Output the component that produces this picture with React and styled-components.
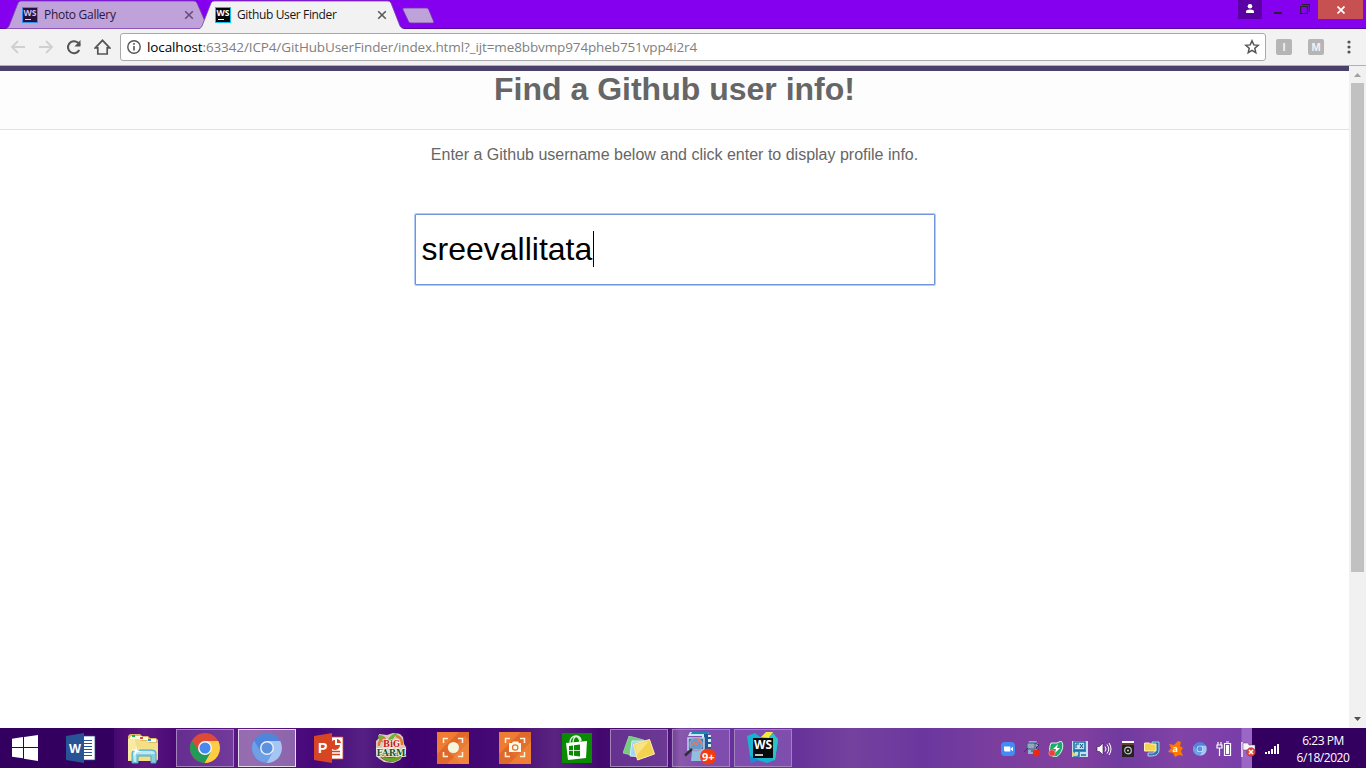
import React from "react";
import styled, { createGlobalStyle } from "styled-components";

const Global = createGlobalStyle`
  * { box-sizing: border-box; }
  body { margin: 0; background: #fff; overflow: hidden; }
  svg { display: block; flex: none; }
`;

const ui = `"Open Sans", "Noto Sans", sans-serif`;

const Screen = styled.div`
  width: 1366px;
  height: 768px;
  display: flex;
  flex-direction: column;
  overflow: hidden;
`;

/* ---------- browser window ---------- */
const TitleBar = styled.div`
  height: 29px;
  background: #8400ee;
  border-bottom: 1px solid #590a9c;
  display: flex;
  align-items: flex-start;
  justify-content: space-between;
  flex: none;
`;
const TabStrip = styled.div`
  display: flex;
  padding-left: 6px;
  height: 29px;
`;
const Tab = styled.div`
  position: relative;
  width: ${(p) => p.$width}px;
  margin-right: ${(p) => p.$overlap || 0}px;
  z-index: ${(p) => (p.$active ? 2 : 1)};
  height: 29px;
  display: flex;
  align-items: center;
  padding: 1px ${(p) => (p.$active ? 17 : 15)}px 0 16px;
`;
const TabShape = styled.svg`
  position: absolute;
  left: 0;
  top: 0;
`;
const TabTitle = styled.span`
  position: relative;
  flex: 1;
  margin-left: 6px;
  font: 12px/16px ${ui};
  letter-spacing: ${(p) => p.$spacing}px;
  color: ${(p) => (p.$active ? "#161616" : "#2c1742")};
  white-space: nowrap;
`;
const Above = styled.span`
  position: relative;
  display: block;
`;
const NewTab = styled.svg`
  margin: 7px 0 0 -2px;
`;
const WindowButtons = styled.div`
  display: flex;
  align-items: flex-start;
  margin-right: 3px;
`;
const WindowButton = styled.div`
  width: ${(p) => p.$width}px;
  height: 19px;
  background: ${(p) => p.$bg || "transparent"};
  display: flex;
  align-items: center;
  justify-content: center;
  padding-bottom: ${(p) => p.$lift || 0}px;
`;
const Toolbar = styled.div`
  height: 37px;
  background: #f2f2f2;
  border-bottom: 1px solid #b3afb8;
  display: flex;
  align-items: center;
  padding: 0 10px;
  flex: none;
`;
const NavButtons = styled.div`
  display: flex;
  gap: 12px;
  width: 110px;
`;
const AddressBar = styled.div`
  width: 1146px;
  height: 28px;
  border: 1px solid #a9a9a9;
  border-radius: 3px;
  background: #fff;
  display: flex;
  align-items: center;
  padding: 0 5px;
`;
const Url = styled.span`
  flex: 1;
  margin-left: 5px;
  font: 13.5px/20px ${ui};
  letter-spacing: -0.12px;
  color: #808080;
  white-space: nowrap;
`;
const Host = styled.span`
  color: #000;
`;
const Extension = styled.div`
  width: 16px;
  height: 16px;
  margin-left: ${(p) => p.$gap}px;
  border-radius: 2px;
  background: #b5b5b5;
  color: #f3f3f3;
  font: bold 11px/16px "Liberation Sans", sans-serif;
  text-align: center;
`;
const Dots = styled.svg`
  margin-left: 22.5px;
`;

/* ---------- page ---------- */
const Viewport = styled.div`
  height: 662px;
  display: flex;
  flex: none;
`;
const Page = styled.main`
  width: 1349px;
  background: #fff;
  display: flex;
  flex-direction: column;
  align-items: center;
  font-family: "Liberation Sans", Arial, sans-serif;
  color: #666;
`;
const PageHeader = styled.header`
  width: 100%;
  height: 64px;
  background: #fdfdfd;
  border-top: 5px solid #4b4068;
  border-bottom: 1px solid #e2e2e2;
  text-align: center;
`;
const Heading = styled.h1`
  margin: 0;
  font-size: 32px;
  line-height: 36px;
`;
const Hint = styled.p`
  margin: 15px 0 0;
  font-size: 16px;
  line-height: 20px;
`;
const UserField = styled.div`
  width: 522px;
  height: 73px;
  margin-top: 48px;
  margin-left: 1px;
  border: 1px solid #b1ccf7;
  border-radius: 2px;
  box-shadow: inset 0 0 0 1px #6f96d9;
  display: flex;
  align-items: center;
  padding: 0 0 1px 6.5px;
  color: #000;
  font-size: 32px;
  line-height: 36px;
`;
const Caret = styled.span`
  width: 1px;
  height: 36px;
  background: #000;
  margin-left: 1px;
`;
const ScrollTrack = styled.div`
  width: 17px;
  background: #f1f1f1;
  display: flex;
  flex-direction: column;
  align-items: center;
`;
const ScrollThumb = styled.div`
  width: 13px;
  height: 489px;
  background: #c1c1c1;
  margin-bottom: auto;
`;

/* ---------- taskbar ---------- */
const TaskBar = styled.footer`
  height: 40px;
  flex: none;
  display: flex;
  background: linear-gradient(
    90deg,
    #34005f 0, #34005f 114px, #46086f 114px, #5d1882 145px, #450672 180px,
    #5b1c84 250px, #46077a 315px, #562083 362px, #3e006f 410px, #450a75 500px,
    #5a237f 555px, #43086f 600px, #4d1578 670px, #744097 680px, #66309c 705px, #673399 800px,
    #75419e 850px, #6b379f 925px, #7b3e9e 1000px, #81409f 1080px,
    #713a9f 1120px, #8143a6 1180px, #7a3eaa 1241px, #9b66c5 1242px,
    #9b66c5 1252px, #34005f 1252px
  );
`;
const StartButton = styled.div`
  width: 52px;
  padding: 7px 0 0 12px;
`;
const Apps = styled.div`
  display: flex;
  gap: 4px;
`;
const TaskButton = styled.div`
  width: 58px;
  height: 38px;
  margin-top: 1px;
  border: 1px solid ${(p) => (p.$active ? "#e4d9ea" : p.$open ? "#a381ba" : "transparent")};
  background: ${(p) => (p.$active ? "rgba(255,255,255,.36)" : p.$open ? "rgba(194,157,226,.27)" : "none")};
  display: flex;
  align-items: center;
  justify-content: center;
`;
const Tray = styled.div`
  margin-left: 208px;
  display: flex;
  align-items: center;
  gap: 8px;
  height: 42px;
`;
const Clock = styled.div`
  width: 86px;
  text-align: center;
  color: #fff;
  font: 12px/17px ${ui};
  letter-spacing: -0.45px;
  padding-top: 4px;
`;

/* ---------- shared icons ---------- */
const TabFill = ({ d, fill, width }) => (
  <TabShape width={width} height="29">
    <path d={`${d}Z`} fill={fill} />
    <path d={d} fill="none" stroke="#75449e" strokeWidth=".8" />
  </TabShape>
);
const Favicon = ({ muted }) => (
  <Above>
    <svg width="16" height="16">
      <rect width="16" height="16" fill={muted ? "#2e91e8" : "#12bdf0"} />
      <rect x="1" y="1" width="14" height="14" fill={muted ? "#29113d" : "#05070a"} />
      <text x="1.5" y="8.5" fontSize="8" fontWeight="bold" fontFamily="Open Sans" fill={muted ? "#d5bfe8" : "#fff"} textLength="13" lengthAdjust="spacingAndGlyphs">WS</text>
      <path d="M3 12.5h6" stroke={muted ? "#e1cdef" : "#fff"} />
    </svg>
  </Above>
);
const CloseX = ({ color }) => (
  <Above>
    <svg width="10" height="10"><path d="M1.2 1.2l7.6 7.6M8.8 1.2l-7.6 7.6" stroke={color} strokeWidth="1.6" /></svg>
  </Above>
);
const Arrow = ({ flip }) => (
  <svg width="16" height="16" viewBox="0 0 16 16" transform={flip ? "scale(-1 1)" : undefined}>
    <path d="M15 8H2.5M8 2L2 8l6 6" fill="none" stroke="#d0d0d0" strokeWidth="1.8" />
  </svg>
);

const ChromeIcon = ({ blue, size = 30 }) => {
  const c = blue ? ["#4f86dc", "#6f9fe4", "#a6c5f3"] : ["#dc4a38", "#219b55", "#ffcd42"];
  return (
    <svg width={size} height={size} viewBox="0 0 30 30">
      <circle cx="15" cy="15" r="15" fill={c[0]} />
      <path d="M2 7.5A15 15 0 0 0 14.6 30L21.2 18.5 15 15 8.7 18.6Z" fill={c[1]} />
      <path d="M15 8.1h13.3A15 15 0 0 1 14.6 30L21.1 18.5Z" fill={c[2]} />
      <circle cx="15" cy="15" r="7" fill={blue ? "#e5effc" : "#f5f5f5"} />
      <circle cx="15" cy="15" r="5.5" fill={blue ? "#5e91dc" : "#4688ef"} />
    </svg>
  );
};
const WordIcon = () => (
  <svg width="30" height="30">
    <path d="M16 3h13v24H16Z" fill="#fff" stroke="#284f89" strokeWidth=".7" />
    <path d="M17 7.5h9M17 10.5h9M17 13.5h9M17 16.5h9M17 19.5h9M17 22.5h9" stroke="#285293" />
    <path d="M0 3L18 0v30L0 27Z" fill="#285394" />
    <text x="3" y="19.5" fontFamily="Liberation Sans" fontWeight="bold" fontSize="13" fill="#fff" textLength="12" lengthAdjust="spacingAndGlyphs">W</text>
  </svg>
);
const ExplorerIcon = () => (
  <svg width="32" height="31" viewBox="0 0 32 31">
    <path d="M1 5V3l2-2h10l2 2h6l2 2h6l2 2v20l-2 1H1Z" fill="#d9bb62" />
    <path d="M2 6h13V3H4ZM12 7h9V4h-8ZM20 9h9V6h-8Z" fill="#fffbe8" />
    <path d="M5 2h3v2H5Z" fill="#11bd32" /><path d="M13 4h3v2h-3Z" fill="#dd4a3a" /><path d="M21 6h3v2h-3Z" fill="#2994df" />
    <path d="M1 6h11l2 2h6l2 2h9v16l-4 2H1Z" fill="#f4df87" />
    <path d="M1 6h7l3 21H1Z" fill="#fff2b8" opacity=".6" />
    <path d="M5 30V20q0-3 4-3h16q4 0 4 3v10h-5v-7H11v7Z" fill="#86cde2" stroke="#50a9c4" />
    <path d="M6 21q0-3 4-3h14q4 0 4 3H9v8H7Z" fill="#bceaf2" />
    <path d="M9 12l1 5 3-2-2 3 4 1-5 0-3 4 1-5-4-1 5-1Z" fill="#fff" />
  </svg>
);
const PptIcon = () => (
  <svg width="30" height="30">
    <path d="M16 4h13v22H16Z" fill="#fff" stroke="#cf4a28" strokeWidth=".8" />
    <path d="M21 7v5h5a5 5 0 1 1-5-5ZM23 6a5 5 0 0 1 4 4h-4Z" fill="#d84523" />
    <path d="M18 18.5h8M18 21.5h8" stroke="#d84523" strokeWidth="1.3" />
    <path d="M0 3L18 0v30L0 27Z" fill="#d84523" />
    <text x="4" y="20" fontFamily="Liberation Sans" fontWeight="bold" fontSize="14" fill="#fff">P</text>
  </svg>
);
const FarmIcon = () => (
  <svg width="34" height="32" viewBox="-1 -1 34 32">
    <path d="M4 1l8 1 6-2 7 1 3 3 1 7 2 3v7l-3 2-3 4-7 3-9-1-6-4-2-4V8l3-3Z" fill="#eadfc5" opacity=".9" />
    <path d="M3 2q7-1 9 6Q17-1 24 0q-6 4-7 8-6 3-10 1-4-2-4-7Z" fill="#6bb334" />
    <path d="M4 13Q3 7 10 5M21 3q6 1 6 9" fill="none" stroke="#df7a31" strokeWidth="2.4" />
    <path d="M3 20h26q-3 8-13 9-10-1-13-9" fill="#6a3f1c" />
    <path d="M5 23q11 4 23-1-2 5-11 7-8-1-12-6Z" fill="#68a32b" />
    <text x="8" y="13.5" fontFamily="DejaVu Serif" fontWeight="bold" fontSize="9.5" stroke="#fff2d8" strokeWidth="1.6" paintOrder="stroke" fill="#c5162a" textLength="17" lengthAdjust="spacingAndGlyphs">BiG</text>
    <text x="1.5" y="22.5" fontFamily="DejaVu Serif" fontWeight="bold" fontSize="10" stroke="#fff8e3" strokeWidth="1.6" paintOrder="stroke" fill="#0b5933" textLength="29" lengthAdjust="spacingAndGlyphs">FARM</text>
  </svg>
);
const CaptureIcon = ({ camera }) => (
  <svg width="32" height="32">
    <rect width="32" height="32" fill="#ee7c32" />
    <path d="M0 22L22 0h10v10L10 32H0Z" fill="#df692a" />
    <path d="M12 20L28 4l4 4v24H24Z" fill="#f08a46" opacity={camera ? ".2" : ".55"} />
    <path d="M6.5 11V6.5H11M21 6.5h4.5V11M25.5 20v4.5H21M11 24.5H6.5V20" fill="none" stroke="#fff1db" strokeWidth="1.5" />
    {camera ? (
      <g><path d="M10 11h3l1-1.5h5l1 1.5h2v9H10Z" fill="#fffbe9" /><circle cx="16.2" cy="15.5" r="2.7" fill="#fffbe9" stroke="#e67530" strokeWidth="1.2" /></g>
    ) : <circle cx="16.4" cy="15.5" r="5.6" fill="#f4f7dd" />}
  </svg>
);
const StoreIcon = () => (
  <svg width="30" height="30">
    <rect width="30" height="30" fill="#088b00" />
    <path d="M8 10q0-6 5-7 5 1 5 7M11 10q0-6 4-7 4 1 4 5" fill="none" stroke="#d9f2d7" strokeWidth="1.3" />
    <path d="M4 10l21-2-1 17-18 2Z" fill="#fff" />
    <path d="M7 13l4-.5v4.7H7ZM12 12.3l6-.7v5.6h-6ZM7 18h4v4.7L7 22ZM12 18h6v5.6l-6-.8Z" fill="#088b00" />
  </svg>
);
const NotesIcon = () => (
  <svg width="33" height="25">
    <path d="M6 0l15 4-5 17L0 17Z" fill="#76cc81" stroke="#a2dfa2" strokeWidth=".7" />
    <path d="M9 5h14v16l-16-1Z" fill="#a5d4f7" stroke="#d9edf8" />
    <path d="M10.5 8.5l16-5 5 14.5-17 6Z" fill="#f3d251" stroke="#fff0a1" />
    <path d="M12 9l14-4-12 14Z" fill="#fff0a3" opacity=".6" />
  </svg>
);
const SearchAppIcon = () => (
  <svg width="34" height="34" viewBox="0 0 34 34">
    <path d="M6 1h19l-2 4H4Z" fill="#c7e9f5" /><path d="M8 1h17l-1 2H7Z" fill="#168bb3" />
    <path d="M18 4h9v24h-9Z" fill="#dceaf3" />
    <path d="M20 3h4v3h3v2h-3v3h3v2h-3v3h3v2h-3v10h-4Z" fill="#1e5997" />
    <path d="M4 7h16v12H4Z" fill="#3a78b9" stroke="#b9cfe8" strokeWidth="1.6" />
    <path d="M8 20h19v10H7Z" fill="#91bfdd" />
    <circle cx="12" cy="13.5" r="6.2" fill="#8db5df" fillOpacity=".55" stroke="#9a9bb8" strokeWidth="1.4" />
    <path d="M7 15l3-4 2 3 3-6 3 6" fill="none" stroke="#f17759" strokeWidth="1.2" />
    <path d="M8 18L1 24.5" stroke="#2e2e37" strokeWidth="2.4" />
    <circle cx="24" cy="25.5" r="8" fill="#f23b10" />
    <text x="18" y="29.5" fill="#fff" fontFamily="Open Sans" fontWeight="bold" fontSize="10.5" textLength="12.5" lengthAdjust="spacingAndGlyphs">9+</text>
  </svg>
);
const WebStormIcon = () => (
  <svg width="32" height="32">
    <path d="M0 4l8-3 5 4 12-3 6 7-3 19-8 3-10-3-6 3Z" fill="#18b3cf" />
    <path d="M14 5l5-5h7l-4 6Z" fill="#f4e843" /><path d="M22 5l4-4 5 6-3 21-3-1Z" fill="#27c4c7" /><path d="M3 24l9 4-8 3Z" fill="#168cdd" />
    <rect x="6" y="6" width="20" height="20" fill="#07090c" />
    <text x="7" y="16.5" fill="#fff" fontFamily="Open Sans" fontWeight="bold" fontSize="12" textLength="18" lengthAdjust="spacingAndGlyphs">WS</text>
    <path d="M8 23h8" stroke="#fff" strokeWidth="1.5" />
  </svg>
);

const trayIcons = [
  <g><rect x="1" y="1" width="14" height="14" rx="4" fill="#438cf5" /><path d="M4 5.5h6.3v5H5L4 9.5Zm6.8 2L13 5.7v4.6l-2.2-1.8Z" fill="#fff" /></g>,
  <g><path d="M5 0h8l-1 2h2v3h-2l2 3-1 5H4V3Z" fill="#93b0ca" /><path d="M3 2h8v6H3Z" fill="#95a5c2" stroke="#355a80" /><path d="M4 7L0 11M7 10h7M11 2l4 2-3 3 3 2" fill="none" stroke="#263f5b" /><circle cx="12.3" cy="12" r="3.4" fill="#ee2714" /></g>,
  <g><path d="M3 2q7 1 10-2 3 3 1 9-3 7-8 7Q0 13 2 5Z" fill="#18ad68" stroke="#dafbe8" /><path d="M10 3L5 8h3l-1 4 5-5H9Z" fill="#fff" /><circle cx="4" cy="12" r="3.2" fill="#ed4038" stroke="#ed979b" strokeWidth=".7" /></g>,
  <g><path d="M0 0h16v16H0Z" fill="#c5e0f3" /><path d="M2 1h11v8H2ZM2 10h5v5H2ZM8 10h6M9 14h5" fill="none" stroke="#176fa5" strokeWidth="1.5" /><path d="M4 7V3h3m1 4l3-4M8 3l3 4" fill="none" stroke="#064e88" /><path d="M0 10l6 5H0" fill="#ecd46c" /></g>,
  <g><path d="M1 5.5h2.5L7 2v12l-3.500-3.500H1Z" fill="#fff" stroke="#452060" strokeWidth=".7" /><path d="M9 5.500q2 2.500 0 5M11 3.500q3.500 4.500 0 9M13 2q4 6 0 12" fill="none" stroke="#fff" /></g>,
  <g><path d="M2 1h12v15H2Z" fill="#242322" /><path d="M2 0h12v2H2Z" fill="#fff" /><path d="M2 3h12" stroke="#a75e41" /><circle cx="8" cy="9.5" r="3.3" fill="#191a1a" stroke="#c5c5c5" strokeWidth="1.2" /><circle cx="8" cy="9.5" r="1" fill="#ddd" /></g>,
  <g><path d="M8 1h7v8q0 6-8 6H4v-3h5q2 0 2-3V4H8Z" fill="#2876a8" stroke="#c8edff" strokeWidth=".8" /><path d="M.5 2h5l1 1H12v7H.5Z" fill="#f6d54b" stroke="#fff3ba" /></g>,
  <g><path d="M1 3l5 1 4-4 3 1-1 4 3 2-2 3 2 5-4-1-4 2-2-4-5-1 3-4Z" fill="#ff7700" /><text x="4.5" y="11" fontSize="9" fontFamily="Open Sans" fontWeight="bold" fill="#fff">a</text></g>,
  <g transform="translate(1 1) scale(.46)"><ChromeIcon blue /></g>,
  <g fill="none" stroke="#fff" strokeWidth="1.2"><path d="M1 4h5v3H1ZM2 1v3M5 1v3M3.5 7v8M8.500 2.500h6v12h-6ZM10 1h3" /><path d="M10 4h3v9h-3Z" fill="#fff" stroke="none" /></g>,
  <g><path d="M2 1v15" stroke="#fff" strokeWidth="1.4" /><path d="M3 2h5l1 2h6v7H8L7 9H3Z" fill="#f5f5f5" stroke="#663d77" strokeWidth=".5" /><circle cx="11" cy="11" r="4.3" fill="#e34537" stroke="#9f2f36" strokeWidth=".6" /><path d="M9 9l4 4m0-4l-4 4" stroke="#fff" strokeWidth="1.5" /></g>,
  <path d="M1 11h2v2H1Zm3-1h2v3H4Zm3-2h2v5H7Zm3-3h2v8h-2Zm3-2h2v10h-2Z" fill="#fff" />,
];

const taskbarApps = [
  { icon: <WordIcon /> },
  { icon: <ExplorerIcon /> },
  { icon: <ChromeIcon />, open: true },
  { icon: <ChromeIcon blue />, open: true, active: true },
  { icon: <PptIcon /> },
  { icon: <FarmIcon /> },
  { icon: <CaptureIcon /> },
  { icon: <CaptureIcon camera /> },
  { icon: <StoreIcon /> },
  { icon: <NotesIcon />, open: true },
  { icon: <SearchAppIcon />, open: true },
  { icon: <WebStormIcon />, open: true },
];

export default function App() {
  return (
    <Screen>
      <Global />
      <TitleBar>
        <TabStrip>
          <Tab $width={203} $overlap={-10}>
            <TabFill width={203} fill="#bfa2d9" d="M0 28.5Q2 28 3 26L12 3Q13 1 15 1H188Q190 1 191 3L201 26Q202 28 203 28.5" />
            <Favicon muted />
            <TabTitle $spacing={-0.3}>Photo Gallery</TabTitle>
            <CloseX color="#674c7c" />
          </Tab>
          <Tab $width={205} $active>
            <TabFill width={205} fill="#f2f2f2" d="M0 29Q2 28 3 26L12 3Q13 1 15 1H189Q191 1 192 3L201 26Q202 28 205 29" />
            <Favicon />
            <TabTitle $spacing={-0.36} $active>Github User Finder</TabTitle>
            <CloseX color="#5a5a5a" />
          </Tab>
          <NewTab width="34" height="18"><path d="M2 1h22q2 0 2.5 1l5 12q1 2-1 2H9q-2 0-2.5-1.5L1 3Q0 1 2 1Z" fill="#bfa2d9" stroke="#7430ac" strokeWidth=".8" /></NewTab>
        </TabStrip>
        <WindowButtons>
          <WindowButton $width={24} $bg="#5b00a5" $lift={3}>
            <svg width="10" height="9"><circle cx="5" cy="2.3" r="2.3" fill="#fff" /><path d="M1 9V7.5Q1 5.5 5 5.5T9 7.5V9Z" fill="#fff" /></svg>
          </WindowButton>
          <WindowButton $width={32}>
            <svg width="8" height="8"><path d="M0 7h8" stroke="#29212f" strokeWidth="2" /></svg>
          </WindowButton>
          <WindowButton $width={21} $lift={1}>
            <svg width="10" height="10"><path d="M.5 2.5h7v7h-7ZM2 .5h7.500V8" fill="none" stroke="#29212f" strokeWidth="1.2" /></svg>
          </WindowButton>
          <WindowButton $width={3} />
          <WindowButton $width={45} $bg="#c75050">
            <svg width="8" height="8"><path d="M.5.5l7 7m0-7l-7 7" stroke="#fff" strokeWidth="1.7" /></svg>
          </WindowButton>
        </WindowButtons>
      </TitleBar>

      <Toolbar>
        <NavButtons>
          <Arrow />
          <Arrow flip />
          <svg width="16" height="16"><path d="M13.3 11A6 6 0 1 1 12 3.7L14 6" fill="none" stroke="#555" strokeWidth="2" /><path d="M14.500 1v6.500H8.500Z" fill="#555" /></svg>
          <svg width="17" height="16"><path d="M1.3 8.8L8.5 1.300l7.200 7.500H13.200V15H3.800V8.800Z" fill="none" stroke="#555" strokeWidth="1.7" /></svg>
        </NavButtons>
        <AddressBar>
          <svg width="16" height="16"><circle cx="8" cy="8" r="6.2" fill="none" stroke="#555" strokeWidth="1.4" /><path d="M8 7v4.500M8 4v1.700" stroke="#555" strokeWidth="1.6" /></svg>
          <Url><Host>localhost</Host>:63342/ICP4/GitHubUserFinder/index.html?_ijt=me8bbvmp974pheb751vpp4i2r4</Url>
          <svg width="16" height="16"><path d="M8 1.800l1.800 4.100 4.400.4-3.400 3 1 4.400L8 11.400l-3.800 2.300 1-4.400-3.400-3 4.400-.4Z" fill="none" stroke="#555" strokeWidth="1.5" /></svg>
        </AddressBar>
        <Extension $gap={10}>I</Extension>
        <Extension $gap={16}>M</Extension>
        <Dots width="4" height="14"><circle cx="2" cy="2" r="1.6" fill="#555" /><circle cx="2" cy="7" r="1.6" fill="#555" /><circle cx="2" cy="12" r="1.6" fill="#555" /></Dots>
      </Toolbar>

      <Viewport>
        <Page>
          <PageHeader><Heading>Find a Github user info!</Heading></PageHeader>
          <Hint>Enter a Github username below and click enter to display profile info.</Hint>
          <UserField>sreevallitata<Caret /></UserField>
        </Page>
        <ScrollTrack>
          <svg width="17" height="17"><path d="M5 11h7L8.500 7Z" fill="#a0a0a0" /></svg>
          <ScrollThumb />
          <svg width="17" height="17"><path d="M5 6h7L8.500 10Z" fill="#505050" /></svg>
        </ScrollTrack>
      </Viewport>

      <TaskBar>
        <StartButton>
          <svg width="26" height="26"><path d="M0 3.700l11-1.600V12H0ZM12 2L26 0v12H12ZM0 13h11v10.200L0 21.700ZM12 13h14v13l-14-2.300Z" fill="#fff" /></svg>
        </StartButton>
        <Apps>
          {taskbarApps.map((app, i) => (
            <TaskButton key={i} $open={app.open} $active={app.active}>{app.icon}</TaskButton>
          ))}
        </Apps>
        <Tray>
          {trayIcons.map((icon, i) => <svg key={i} width="16" height="16">{icon}</svg>)}
        </Tray>
        <Clock><div>6:23 PM</div><div>6/18/2020</div></Clock>
      </TaskBar>
    </Screen>
  );
}
